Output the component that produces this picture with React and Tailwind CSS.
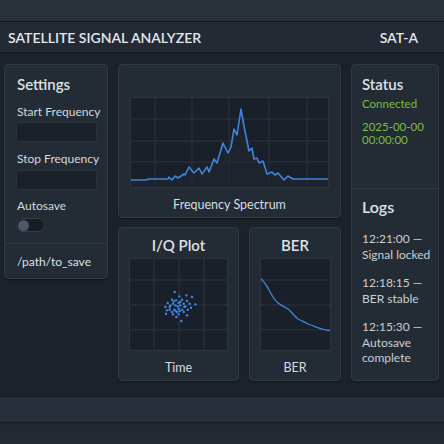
import React from 'react'

// spectrum trace in chart-local coords (chart is 199 x 91)
const SPECTRUM = [
  [0, 83], [16, 83], [19, 82], [38, 82], [39, 80], [42, 83], [45, 79], [48, 81],
  [54, 77], [55, 78], [59, 70], [64, 76], [69, 71], [72, 77], [77, 70], [79, 75],
  [84, 62], [87, 66], [93, 46], [98, 56], [101, 50], [104, 32], [107, 38], [111, 12],
  [114, 29], [119, 54], [122, 51], [124, 62], [127, 61], [129, 66], [133, 64],
  [137, 77], [142, 75], [145, 78], [148, 76], [154, 83], [158, 79], [163, 82],
  [171, 82], [199, 82],
]

// constellation points, measured at 3x from the panel corner
const IQ_DOTS = [
  [183, 205], [197, 218], [218, 215], [235, 220], [175, 228], [187, 230], [205, 228],
  [220, 232], [162, 238], [178, 240], [195, 238], [210, 240], [228, 240], [245, 242],
  [155, 250], [168, 250], [185, 245], [192, 248], [200, 245], [215, 248], [168, 258],
  [182, 258], [195, 255], [205, 258], [222, 258], [175, 265], [190, 265], [210, 265],
  [157, 270], [178, 272], [195, 272], [220, 275], [188, 280], [203, 292], [170, 245],
  [200, 235], [186, 262], [160, 260], [232, 252], [212, 250], [180, 233], [198, 262],
]

function Spectrum() {
  const pts = SPECTRUM.map(p => p.join(',')).join(' ')
  return (
    <svg width="199" height="91" viewBox="0 0 199 91" className="block">
      <rect width="199" height="91" fill="#1a2029" />
      {[25, 62, 99, 139, 177].map(x => (
        <line key={x} x1={x} y1="0" x2={x} y2="91" stroke="#2c3540" strokeWidth="1" />
      ))}
      {[22, 44, 65].map(y => (
        <line key={y} x1="0" y1={y} x2="199" y2={y} stroke="#2c3540" strokeWidth="1" />
      ))}
      <polygon points={`0,91 ${pts} 199,91`} fill="#202832" opacity="0.6" />
      <polyline points={pts} fill="none" stroke="#3d86dc" strokeWidth="1.6" strokeLinejoin="round" />
      <rect x="0.5" y="0.5" width="198" height="90" fill="none" stroke="#2c3540" />
    </svg>
  )
}

function IQPlot() {
  return (
    <svg width="99" height="93" viewBox="0 0 99 93" className="block">
      <rect width="99" height="93" fill="#1a2029" />
      {[25, 50, 75].map(x => (
        <line key={x} x1={x} y1="0" x2={x} y2="93" stroke="#2c3540" />
      ))}
      {[22, 47, 72].map(y => (
        <line key={y} x1="0" y1={y} x2="99" y2={y} stroke="#2c3540" />
      ))}
      {IQ_DOTS.map(([x, y], i) => (
        <circle key={i} cx={x / 3 - 15.3} cy={y / 3 - 34.3} r="1.2" fill="#3d88ea" />
      ))}
      <rect x="0.5" y="0.5" width="98" height="92" fill="none" stroke="#2c3540" />
    </svg>
  )
}

function BerPlot() {
  return (
    <svg width="71" height="93" viewBox="0 0 71 93" className="block">
      <rect width="71" height="93" fill="#1a2029" />
      {[22, 47, 72].map(y => (
        <line key={y} x1="0" y1={y} x2="71" y2={y} stroke="#2c3540" />
      ))}
      <path
        d="M0 20 C4 23 6 27 8 30 C11 36 14 42 18 45 C22 48 25 49 28 51 C32 54 34 58 38 61 C42 63 45 64 48 66 C54 68 58 70 62 71 C65 72 68 72.5 71 72.5"
        fill="none"
        stroke="#3d86dc"
        strokeWidth="1.3"
      />
      <rect x="0.5" y="0.5" width="70" height="92" fill="none" stroke="#2c3540" />
    </svg>
  )
}

const panel = 'rounded-[4px] border border-[#313a44] bg-[#232b34] shadow-[0_1px_2px_rgba(0,0,0,0.4)]'

export default function App() {
  return (
    <div
      className="flex h-[444px] w-[444px] flex-col overflow-hidden bg-[#1c2229] text-[#dde2e8]"
      style={{ fontFamily: 'Lato, "Noto Sans", sans-serif' }}
    >
      <div className="h-[22px] shrink-0 border-b border-[#161b21] bg-[#283039]" />
      <header className="flex h-[31px] shrink-0 items-center justify-between border-b border-[#161b21] bg-[#232a33] pl-2 pr-[26px]">
        <h1 className="text-[14px] font-semibold text-[#e3e7ec]">SATELLITE SIGNAL ANALYZER</h1>
        <span className="text-[14px] font-semibold text-[#e3e7ec]">SAT-A</span>
      </header>

      <main className="flex h-[343px] shrink-0 gap-[10px] bg-[#1c2229] pl-1 pt-[11px]">
        <section className={`${panel} flex h-[215px] w-[104px] shrink-0 flex-col`}>
          <div className="flex flex-col items-start px-3 pt-[9px]">
            <h2 className="text-[15px] font-semibold leading-[20px]">Settings</h2>
            <label className="mt-[10px] whitespace-nowrap text-[12px] leading-[16px] text-[#d4d9df]">Start Frequency</label>
            <div className="-ml-px mt-[2px] h-[20px] w-[81px] shrink-0 rounded-[3px] border border-[#2b333d] bg-[#1b2129]" />
            <label className="mt-[9px] whitespace-nowrap text-[12px] leading-[16px] text-[#d4d9df]">Stop Frequency</label>
            <div className="-ml-px mt-[3px] h-[20px] w-[81px] shrink-0 rounded-[3px] border border-[#2b333d] bg-[#1b2129]" />
            <label className="mt-[8px] text-[12px] leading-[16px] text-[#d4d9df]">Autosave</label>
            <div className="-ml-px mt-[4px] flex h-[14px] w-[29px] shrink-0 items-center rounded-full border border-[#343d48] bg-[#181d24] px-px">
              <div className="h-[11px] w-[11px] rounded-full bg-[#4e5866]" />
            </div>
          </div>
          <div className="mt-[11px] border-t border-[#303943]" />
          <div className="px-3 pt-[10px] text-[12px] leading-[16px] text-[#dde2e8]">/path/to_save</div>
        </section>

        <div className="flex w-[223px] shrink-0 flex-col gap-[9px]">
          <section className={`${panel} flex h-[154px] flex-col items-center pt-[32px]`}>
            <Spectrum />
            <div className="mt-[9px] text-[12.5px] leading-[16px] text-[#d7dce2]">Frequency Spectrum</div>
          </section>
          <div className="flex h-[154px] gap-[10px]">
            <section className={`${panel} flex w-[121px] flex-col items-center`}>
              <h3 className="mt-[7px] text-[15px] font-semibold leading-[20px]">I/Q Plot</h3>
              <div className="mt-[3px]"><IQPlot /></div>
              <div className="mt-[9px] text-[12.5px] leading-[16px] text-[#d7dce2]">Time</div>
            </section>
            <section className={`${panel} flex w-[92px] flex-col items-center`}>
              <h3 className="mt-[7px] text-[15px] font-semibold leading-[20px]">BER</h3>
              <div className="mt-[3px]"><BerPlot /></div>
              <div className="mt-[9px] text-[12.5px] leading-[16px] text-[#d7dce2]">BER</div>
            </section>
          </div>
        </div>

        <section className={`${panel} flex h-[317px] w-[88px] shrink-0 flex-col`}>
          <div className="h-[123px] shrink-0 px-[10px] pt-[9px]">
            <h2 className="text-[15px] font-semibold leading-[20px]">Status</h2>
            <div className="mt-[2px] text-[11.5px] leading-[16px] text-[#7cbd45]">Connected</div>
            <div className="mt-[8px] whitespace-nowrap text-[11.5px] leading-[13px] text-[#7cbd45]">
              2025-00-00<br />00:00:00
            </div>
          </div>
          <div className="border-t border-[#303943]" />
          <div className="px-[10px] pt-[8px]">
            <h2 className="text-[16px] font-semibold leading-[20px]">Logs</h2>
            <ul className="mt-[14px] flex flex-col gap-[13px] whitespace-nowrap text-[12px] leading-[15.5px] text-[#c9cfd6]">
              <li>12:21:00 —<br />Signal locked</li>
              <li>12:18:15 —<br />BER stable</li>
              <li>12:15:30 —<br />Autosave<br />complete</li>
            </ul>
          </div>
        </section>
      </main>

      <div className="h-[27px] shrink-0 border-y border-[#161b21] bg-[#27303a]" />
      <div className="flex-1 bg-gradient-to-b from-[#1f262e] to-[#242b33]" />
    </div>
  )
}
